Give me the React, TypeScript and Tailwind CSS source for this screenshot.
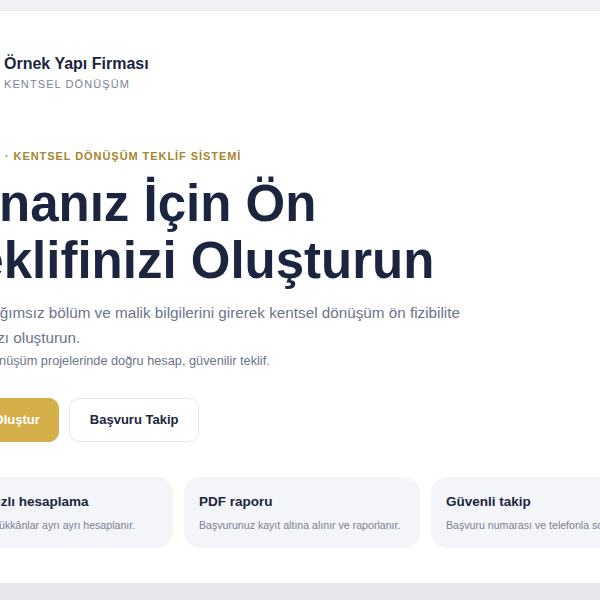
import React from 'react';

const features = [
  { title: 'Daha hızlı hesaplama', text: 'Evler ve dükkânlar ayrı ayrı hesaplanır.' },
  { title: 'PDF raporu', text: 'Başvurunuz kayıt altına alınır ve raporlanır.' },
  { title: 'Güvenli takip', text: 'Başvuru numarası ve telefonla sorgulayın.' },
];

export default function App() {
  return (
    <div className="h-[600px] w-full overflow-hidden bg-[#eff1f4] pt-[10px] flex flex-col font-['Liberation_Sans',Arial,sans-serif]">
      <main className="h-[573px] shrink-0 overflow-hidden bg-white border-t border-[#e6e9ee]">
        <div className="-ml-[52px]">
          {/* Header */}
          <header className="pt-[40px] flex items-center gap-3">
            <div className="w-11 h-11 rounded-xl bg-[#1b2540] flex items-center justify-center">
              <svg width="22" height="22" viewBox="0 0 24 24" fill="none" stroke="#d4ae48" strokeWidth="2" strokeLinecap="round" strokeLinejoin="round">
                <path d="M3 21h18M5 21V8l7-5 7 5v13M9 21v-6h6v6" />
              </svg>
            </div>
            <div className="flex flex-col">
              <span className="text-[16px] leading-5 font-bold text-[#1b2540]">Örnek Yapı Firması</span>
              <span className="mt-[2px] text-[11px] leading-4 tracking-widest text-[#7b8294]">KENTSEL DÖNÜŞÜM</span>
            </div>
          </header>

          {/* Hero */}
          <section className="mt-[53px]">
            <p className="-ml-[4px] text-[11px] leading-4 font-bold tracking-[0.085em] text-[#a6852f]">
              E-TEKLİF · KENTSEL DÖNÜŞÜM TEKLİF SİSTEMİ
            </p>
            <h1 className="mt-[11px] text-[51px] leading-[57px] font-bold text-[#1b2540]">
              Binanız İçin Ön
              <br />
              Teklifinizi Oluşturun
            </h1>
            <p className="mt-[11px] max-w-[540px] text-[15.25px] leading-[25px] text-[#6b7489]">
              Tüm bağımsız bölüm ve malik bilgilerini girerek kentsel dönüşüm ön fizibilite kaydınızı oluşturun.
            </p>
            <p className="mt-[2px] text-[12.75px] leading-[18px] text-[#6b7489]">
              Bütün dönüşüm projelerinde doğru hesap, güvenilir teklif.
            </p>

            <div className="mt-[28px] -ml-[10px] flex gap-[10px]">
              <button className="h-[44px] px-[18px] rounded-[10px] border border-[#d4ae48] bg-[#d4ae48] text-[13px] font-bold text-white">
                Teklif Oluştur
              </button>
              <button className="h-[44px] px-5 rounded-[10px] border border-[#e3e6ee] bg-white text-[13px] font-bold text-[#1b2540]">
                Başvuru Takip
              </button>
            </div>
          </section>

          {/* Features */}
          <div className="mt-[35px] -ml-[11px] grid grid-cols-[repeat(3,236px)] gap-[11px]">
            {features.map((f) => (
              <div key={f.title} className="rounded-2xl bg-[#f4f5f9] px-[15px] py-[15px]">
                <div className="text-[13.5px] leading-5 font-bold text-[#1b2540]">{f.title}</div>
                <div className="mt-[5px] text-[10.6px] leading-4 text-[#7a8195] whitespace-nowrap">{f.text}</div>
              </div>
            ))}
          </div>
        </div>
      </main>
      <div className="flex-1 bg-[#e5e7eb]" />
    </div>
  );
}
